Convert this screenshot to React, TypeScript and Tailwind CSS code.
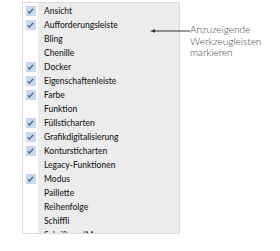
import React from 'react';

const items: { label: string; checked: boolean }[] = [
  { label: 'Ansicht', checked: true },
  { label: 'Aufforderungsleiste', checked: true },
  { label: 'Bling', checked: false },
  { label: 'Chenille', checked: false },
  { label: 'Docker', checked: true },
  { label: 'Eigenschaftenleiste', checked: true },
  { label: 'Farbe', checked: true },
  { label: 'Funktion', checked: false },
  { label: 'Füllsticharten', checked: true },
  { label: 'Grafikdigitalisierung', checked: true },
  { label: 'Kontursticharten', checked: true },
  { label: 'Legacy-Funktionen', checked: false },
  { label: 'Modus', checked: true },
  { label: 'Paillette', checked: false },
  { label: 'Reihenfolge', checked: false },
  { label: 'Schiffli', checked: false },
  { label: 'Schriftzug/Monogramme', checked: false },
];

const Check = () => (
  <svg width="7" height="6" viewBox="0 0 7 6" fill="none">
    <path d="M0.8 3.2 L2.6 5 L6.2 0.8" stroke="#55708f" strokeWidth="1.4" />
  </svg>
);

export default function App() {
  return (
    <div className="relative w-[280px] h-[251px] bg-white overflow-hidden font-['Lato',sans-serif]">
      <div className="pt-[2px] pl-[22px]">
        {/* Toolbar menu */}
        <div className="w-[158px] h-[232px] border border-[#dcdcdc] bg-[#ececec] flex overflow-hidden">
          <div className="w-[15px] bg-white shrink-0" />
          <div className="flex-1" />
        </div>
      </div>

      <div className="absolute left-[23px] top-[3px] w-[156px] h-[230px] pt-[1px] overflow-hidden flex flex-col">
        {items.map(it => (
          <div key={it.label} className="h-[14px] shrink-0 flex items-center">
            <div className="w-[15px] flex justify-center">
              {it.checked && (
                <div className="w-[10px] h-[10px] bg-[#c7d9f0] flex items-center justify-center">
                  <Check />
                </div>
              )}
            </div>
            <span className="ml-[6px] text-[8.5px] leading-[14px] font-medium text-[#1a1a1a] whitespace-nowrap">
              {it.label}
            </span>
          </div>
        ))}
      </div>

      {/* Callout */}
      <div className="absolute left-[150px] top-[24px] flex items-start">
        <svg width="40" height="10" viewBox="0 0 40 10" className="mt-[2px]">
          <path d="M0 5 L5 3.2 L5 6.8 Z" fill="#333" />
          <path d="M4 5 H40" stroke="#333" strokeWidth="1" />
        </svg>
        <div className="text-[10px] leading-[11.5px] text-[#444] font-light">
          <div>Anzuzeigende</div>
          <div>Werkzeugleisten</div>
          <div>markieren</div>
        </div>
      </div>
    </div>
  );
}
